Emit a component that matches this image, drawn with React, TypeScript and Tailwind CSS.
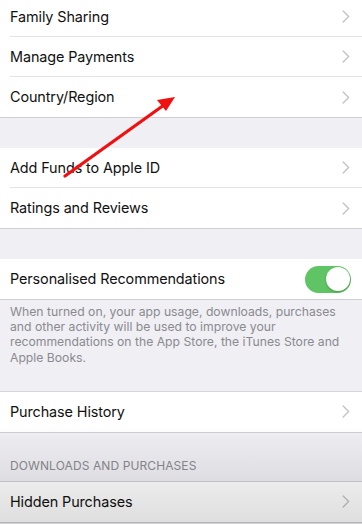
import React from "react";

const font = { fontFamily: 'Inter, "Noto Sans", Roboto, sans-serif' };

function Chevron() {
  return (
    <svg width="8" height="13" viewBox="0 0 8 13" className="shrink-0">
      <path d="M1.2 1 L6.6 6.5 L1.2 12" fill="none" stroke="#c4c4c8" strokeWidth="1.4" strokeLinecap="round" strokeLinejoin="round" />
    </svg>
  );
}

function Row({ label, last, children }: { label: string; last?: boolean; children?: React.ReactNode }) {
  return (
    <div className="pl-[10px] bg-white">
      <div className={`h-[40px] flex items-center justify-between pr-[12px] ${last ? "" : "border-b border-[#e3e3e6]"}`}>
        <span className="text-[14.4px] text-[#111] tracking-[-0.1px]">{label}</span>
        {children ?? <Chevron />}
      </div>
    </div>
  );
}

function Group({ children }: { children: React.ReactNode }) {
  return <div className="border-b border-[#cfcfd3] bg-white">{children}</div>;
}

export default function App() {
  return (
    <div className="relative w-[362px] h-[524px] overflow-hidden bg-[#efeff4]" style={font}>
      <div className="-mt-[3px]">
        <Group>
          <Row label="Family Sharing" />
          <Row label="Manage Payments" />
          <Row label="Country/Region" last />
        </Group>
        <div className="h-[30px]" />
        <Group>
          <Row label="Add Funds to Apple ID" />
          <Row label="Ratings and Reviews" last />
        </Group>
        <div className="h-[30px]" />
        <Group>
          <Row label="Personalised Recommendations" last>
            <div className="w-[46px] h-[27px] rounded-full bg-[#5fc463] flex items-center justify-end pr-[1.5px] mr-[-1px]">
              <div className="w-[24px] h-[24px] rounded-full bg-white shadow-[0_1px_2px_rgba(0,0,0,0.25)]" />
            </div>
          </Row>
        </Group>
        <div className="px-[10px] pt-[4px] pb-[26px] text-[12.2px] leading-[15.2px] text-[#8a8a8f] whitespace-nowrap">
          When turned on, your app usage, downloads, purchases<br />
          and other activity will be used to improve your<br />
          recommendations on the App Store, the iTunes Store and<br />
          Apple Books.
        </div>
        <div className="border-t border-[#d6d6da]">
          <Group>
            <Row label="Purchase History" last />
          </Group>
        </div>
        <div className="h-[48px] flex items-end px-[10px] pb-[6px]">
          <span className="text-[12px] text-[#8a8a8f] uppercase tracking-[0.1px]">Downloads and Purchases</span>
        </div>
        <div className="border-t border-[#cfcfd3]">
          <Group>
            <Row label="Hidden Purchases" last />
          </Group>
        </div>
      </div>
      <div className="pointer-events-none absolute left-0 right-0 bottom-0 h-[100px] bg-gradient-to-b from-transparent to-[rgba(0,0,0,0.13)]" />
      <svg className="pointer-events-none absolute left-0 top-0" width="362" height="524">
        <line x1="65" y1="176" x2="164" y2="105" stroke="#f10f0f" strokeWidth="3.2" strokeLinecap="round" />
        <polygon points="175,97 157,100 166,111" fill="#f10f0f" />
      </svg>
    </div>
  );
}
